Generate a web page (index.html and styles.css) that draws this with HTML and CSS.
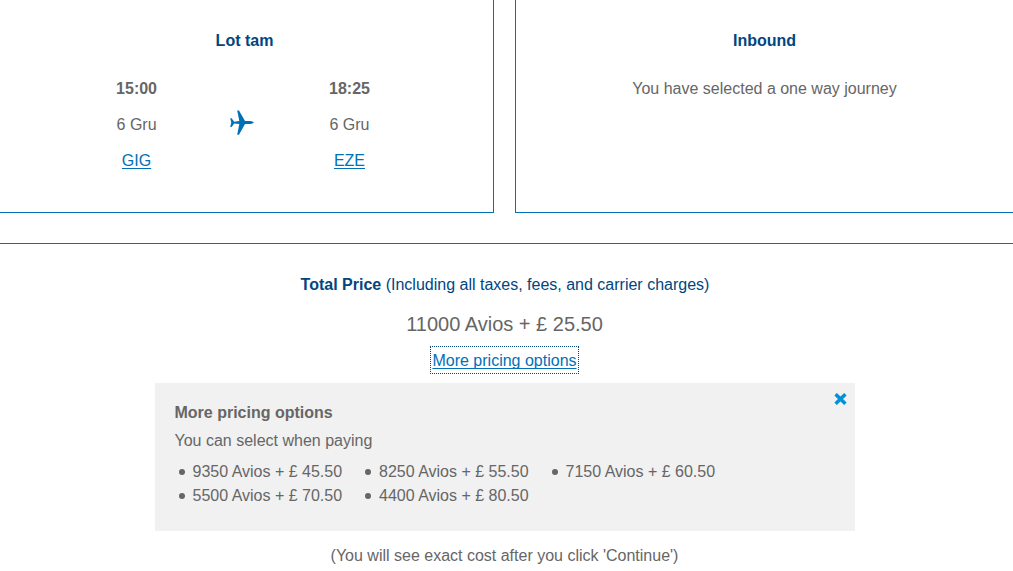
FILE: index.html
```
<!DOCTYPE html>
<html lang="en">
<head>
    <meta charset="UTF-8">
    <meta name="viewport" content="width=device-width, initial-scale=1.0">
    <title>Price quote</title>
    <link rel="stylesheet" href="styles.css">
</head>
<body>

<div class="journeys">
    <div class="journey outbound">
        <h3>Lot tam</h3>
        <div class="flight">
            <div class="airport">
                <p class="time">15:00</p>
                <p>6 Gru</p>
                <p><a href="#">GIG</a></p>
            </div>
            <svg class="plane" width="24" height="26" viewBox="0 0 24 26">
                <path d="M0.2 8.2H1.6L4.2 11.7L9.3 11.1L7.2 0.4H9L15 11.1H20.5Q23.7 11.7 23.9 12.6Q23.7 13.5 20.5 14.1H15L9 24.8H7.2L9.3 14.1L4.2 13.5L1.6 17H0.2L1.3 12.6Z"/>
            </svg>
            <div class="airport">
                <p class="time">18:25</p>
                <p>6 Gru</p>
                <p><a href="#">EZE</a></p>
            </div>
        </div>
    </div>
    <div class="journey inbound">
        <h3>Inbound</h3>
        <p>You have selected a one way journey</p>
    </div>
</div>

<div class="total">
    <h3>Total Price <span>(Including all taxes, fees, and carrier charges)</span></h3>
    <p class="price">11000 Avios + £ 25.50</p>
    <a href="#" class="more-link">More pricing options</a>

    <div class="options">
        <svg class="close" width="13" height="12" viewBox="0 0 13 12">
            <path d="M1.6 1.2L11.4 10.8M11.4 1.2L1.6 10.8"/>
        </svg>
        <h4>More pricing options</h4>
        <p>You can select when paying</p>
        <ul>
            <li>9350 Avios + £ 45.50</li>
            <li>8250 Avios + £ 55.50</li>
            <li>7150 Avios + £ 60.50</li>
            <li>5500 Avios + £ 70.50</li>
            <li>4400 Avios + £ 80.50</li>
        </ul>
    </div>

    <p class="note">(You will see exact cost after you click 'Continue')</p>
</div>

</body>
</html>
```

FILE: styles.css
```
* {
    box-sizing: border-box;
}
body {
    margin: 0;
    font-family: "Liberation Sans", Arial, sans-serif;
    font-size: 16px;
    line-height: 24px;
    color: #666;
    background-color: #fff;
    overflow: hidden;
}
h3, h4, p, ul {
    margin: 0;
    padding: 0;
    font-size: 16px;
}
h3 {
    color: #004680;
}
a {
    color: #0071b6;
    text-underline-offset: 2px;
    text-decoration-skip-ink: none;
}
.journeys {
    display: grid;
    grid-template-columns: 494px 499px;
    column-gap: 21px;
    height: 213px;
}
.journey {
    padding-top: 29px;
    border-bottom: 1px solid #0071b6;
    text-align: center;
}
.journey h3 {
    margin-bottom: 24px;
}
.outbound {
    border-right: 1px solid #0071b6;
    padding-right: 4px;
}
.inbound {
    border-left: 1px solid #0071b6;
    padding-right: 1px;
}
.flight {
    display: flex;
    justify-content: center;
    align-items: center;
    gap: 74px;
    padding-right: 3px;
}
.airport p + p {
    margin-top: 12px;
}
.time {
    font-weight: bold;
}
.plane {
    margin: 0 1px 4px -1px;
    fill: #0071b6;
}
.total {
    margin-top: 30px;
    border-top: 1px solid #0071b6;
    padding: 29px 4px 0 0;
    text-align: center;
}
.total h3 {
    padding-left: 1px;
}
.total h3 span {
    font-weight: normal;
}
.price {
    margin-top: 11px;
    font-size: 20px;
    line-height: 32px;
}
.more-link {
    display: block;
    width: 149px;
    margin: 6px auto 0;
    padding: 2px 0 0;
    border: 1px dotted #004680;
    white-space: nowrap;
}
.options {
    position: relative;
    width: 700px;
    height: 148px;
    margin: 9px auto 0;
    padding: 18px 20px;
    background-color: #f1f1f1;
    text-align: left;
}
.options p {
    margin-top: 4px;
}
.close {
    position: absolute;
    top: 10px;
    right: 8px;
    stroke: #0092d6;
    stroke-width: 3.5;
}
.options ul {
    display: grid;
    grid-template-columns: repeat(3, 186.5px);
    margin-top: 7px;
    padding-left: 4px;
    list-style: none;
}
.options li {
    display: flex;
    align-items: center;
}
.options li::before {
    content: "";
    width: 6px;
    height: 6px;
    margin-right: 8px;
    border-radius: 50%;
    background-color: #666;
}
.note {
    margin-top: 13px;
}
```
